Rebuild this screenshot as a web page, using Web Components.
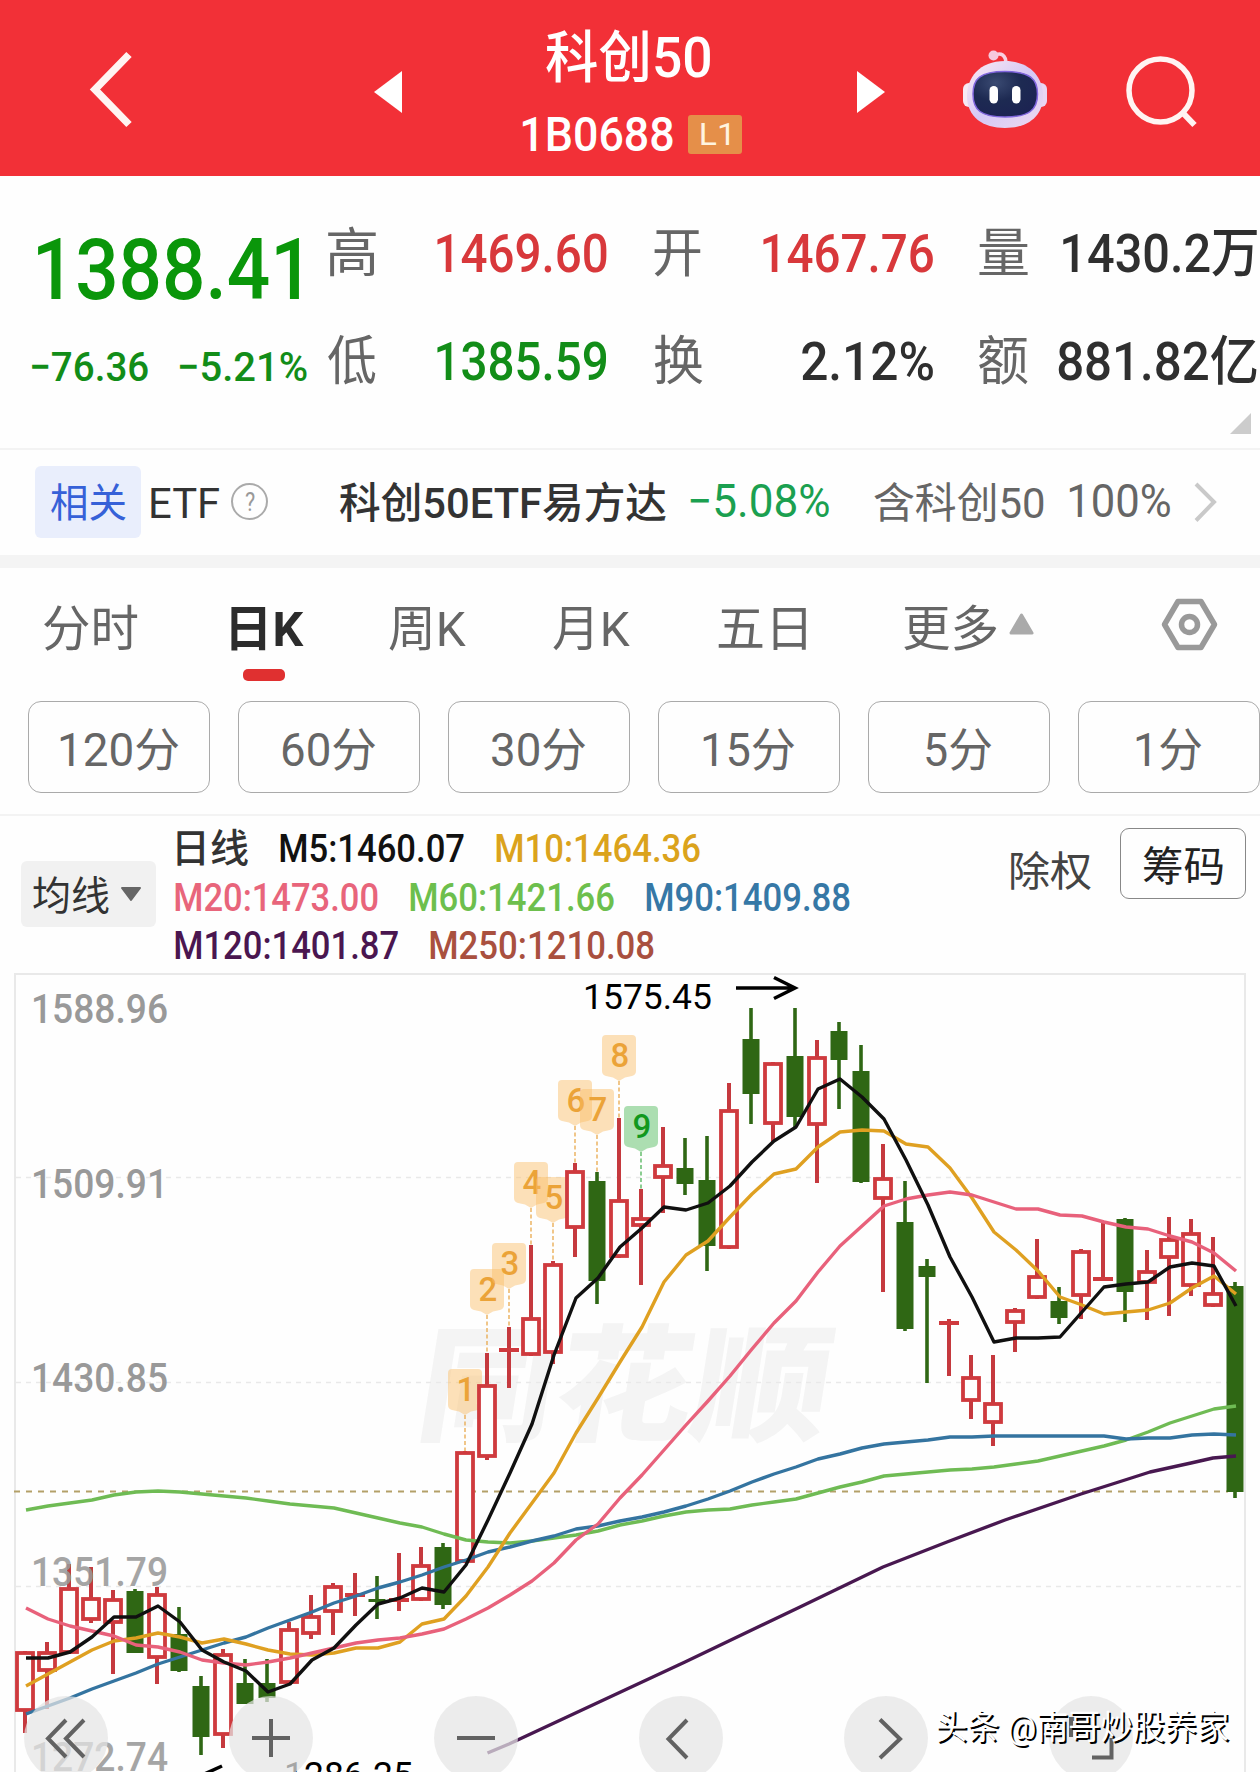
<!DOCTYPE html>
<html lang="zh-CN">
<head>
<meta charset="utf-8">
<title>科创50 1B0688</title>
<style>
  html, body { margin: 0; padding: 0; }
  body {
    width: 1260px;
    height: 1772px;
    overflow: hidden;
    background: #fefefe;
    font-family: Roboto, "Noto Sans CJK SC", sans-serif;
    color: #333;
  }
</style>
</head>
<body>
<stock-page></stock-page>

<script>
// small helper: attach an open shadow root and fill it from a template
function render(el, html) {
  const template = document.createElement('template');
  template.innerHTML = html;
  el.attachShadow({ mode: 'open' });
  el.shadowRoot.appendChild(template.content.cloneNode(true));
}

// ---------- header ----------
class StockHeader extends HTMLElement {
  constructor() {
    super();
    render(this, `
      <style>
        :host { display: flex; height: 176px; background: #f23037; color: #fff; }
        svg { display: block; flex: none; height: 176px; }
        .title { width: 223px; padding-top: 27px; box-sizing: border-box; }
        .name { margin-left: 26px; height: 62px; font-size: 56px; line-height: 62px; font-weight: 500; }
        .code { display: flex; align-items: center; margin: 26px 0 0 3px; height: 39px; font-size: 49px; line-height: 41px; font-weight: 500; }
        .badge {
          display: flex; align-items: center; justify-content: center;
          margin-left: 15px; width: 54px; height: 39px; border-radius: 3px;
          background: #e58f49; color: #fff4e0; font-size: 31px; font-weight: 400;
        }
      </style>
      <svg width="520" viewBox="0 0 520 176">
        <path d="M129 54.500L95 89.500L129 124.500" fill="none" stroke="#fff4f2" stroke-width="7.500"/>
        <path d="M374 92L402 71V113Z" fill="#fff"/>
      </svg>
      <div class="title">
        <div class="name"><fit-text w="164">科创50</fit-text></div>
        <div class="code"><fit-text w="150">1B0688</fit-text><span class="badge"><fit-text w="29">L1</fit-text></span></div>
      </div>
      <svg width="517" viewBox="743 0 517 176">
        <defs>
          <linearGradient id="shell" x1="0" y1="0" x2="1" y2="1">
            <stop offset="0" stop-color="#fdeaf3"/><stop offset=".5" stop-color="#d5c9f5"/><stop offset="1" stop-color="#efd9ef"/>
          </linearGradient>
          <radialGradient id="face" cx=".35" cy=".25" r=".8">
            <stop offset="0" stop-color="#3a4a72"/><stop offset=".5" stop-color="#1d2a52"/><stop offset="1" stop-color="#1c2352"/>
          </radialGradient>
        </defs>
        <path d="M885 92L857 71V113Z" fill="#fff"/>
        <path d="M994 55.500C1001 52 1006 55 1006 64" fill="none" stroke="#f9cfe0" stroke-width="3.500"/>
        <circle cx="993.500" cy="55.500" r="5" fill="#f6c8dc"/>
        <rect x="963" y="83" width="12" height="24" rx="6" fill="#f7e9f5"/>
        <rect x="1035" y="83" width="12" height="24" rx="6" fill="#e9d5f3"/>
        <path d="M1005 61C1031 61 1043 78 1043 96C1043 117 1027 128 1005 128C983 128 967 117 967 96C967 78 979 61 1005 61Z" fill="url(#shell)"/>
        <path d="M1005 71.500C1030 71.500 1037.500 79 1037.500 94C1037.500 110 1029 117 1005 117C981 117 973 110 973 94C973 79 980 71.500 1005 71.500Z" fill="url(#face)" stroke="#8066dd" stroke-width="1.500"/>
        <rect x="989.500" y="86" width="8.500" height="17.500" rx="4.200" fill="#fff"/>
        <rect x="1012" y="86" width="8.500" height="17.500" rx="4.200" fill="#fff"/>
        <ellipse cx="1160.500" cy="90.500" rx="31.500" ry="31.500" fill="none" stroke="#fff4f2" stroke-width="5.500"/>
        <path d="M1182 112L1194.500 125" stroke="#fff4f2" stroke-width="6"/>
      </svg>
    `);
  }
}

// ---------- price and day figures ----------
class StatCell extends HTMLElement {
  connectedCallback() {
    const a = (n) => this.getAttribute(n);
    render(this, `
      <style>
        :host { display: flex; justify-content: space-between; align-items: center; font-size: 53px; line-height: 60px; font-weight: 500; color: ${a('color') || '#2f2f2f'}; }
        .label { color: #666; font-weight: 400; font-size: 53px; }
      </style>
      <fit-text class="label" w="${a('lw')}">${a('label')}</fit-text>
      <fit-text w="${a('w')}">${a('value')}</fit-text>
    `);
  }
}

class QuotePanel extends HTMLElement {
  constructor() {
    super();
    render(this, `
      <style>
        :host { display: flex; height: 274px; box-sizing: border-box; border-bottom: 2px solid #f3f3f3; padding-top: 24px; }
        .price { width: 328px; box-sizing: border-box; color: #0a960a; }
        .last { display: block; margin: 25px 0 0 38px; font-size: 85px; line-height: 90px; font-weight: 500; }
        .diff { display: flex; gap: 32px; margin: 27px 0 0 32px; font-size: 41px; line-height: 50px; font-weight: 500; color: #128d18; }
        .stats { display: grid; grid-template-columns: 279px 279px 278px; grid-template-rows: 108px 108px; column-gap: 46.500px; }
        svg { display: block; width: 21px; height: 21px; margin-left: auto; margin-right: 6px; margin-top: -3px; }
      </style>
      <div class="price">
        <fit-text class="last" w="261">1388.41</fit-text>
        <div class="diff"><fit-text w="116">−76.36</fit-text><fit-text w="127">−5.21%</fit-text></div>
      </div>
      <div>
        <div class="stats">
          <stat-cell label="高" lw="48" value="1469.60" w="170" color="#d8383b"></stat-cell>
          <stat-cell label="开" lw="47" value="1467.76" w="170" color="#d8383b"></stat-cell>
          <stat-cell label="量" lw="49" value="1430.2万" w="194"></stat-cell>
          <stat-cell label="低" lw="48" value="1385.59" w="170" color="#128d18"></stat-cell>
          <stat-cell label="换" lw="49" value="2.12%" w="131"></stat-cell>
          <stat-cell label="额" lw="49" value="881.82亿" w="199"></stat-cell>
        </div>
        <svg viewBox="0 0 21 21"><path d="M21 0V21H0Z" fill="#ccc"/></svg>
      </div>
    `);
  }
}

// ---------- related ETF strip ----------
class RelatedBar extends HTMLElement {
  constructor() {
    super();
    render(this, `
      <style>
        :host { display: flex; align-items: center; height: 118px; box-sizing: border-box; border-bottom: 13px solid #f4f4f4; padding: 0 0 2px 35px; line-height: 55px; font-size: 42px; }
        .tag { display: flex; align-items: center; justify-content: center; width: 106px; height: 72px; border-radius: 6px; background: #e9eefc; color: #3661d8; font-size: 40px; line-height: 60px; }
        .tag fit-text { padding-top: 5px; }
        .text { padding-top: 4px; }
        .help { display: flex; align-items: center; justify-content: center; box-sizing: border-box; width: 37px; height: 37px; margin-left: 12px; border: 2px solid #aaa; border-radius: 50%; color: #999; font-size: 26px; line-height: 30px; }
        .chg { color: #1ba050; font-size: 46px; margin-left: 24px; }
        .hold { color: #666; margin-left: 45px; }
        .pct { color: #666; font-size: 46px; margin-left: 25px; }
        svg { margin-left: 24px; }
      </style>
      <span class="tag"><fit-text w="75">相关</fit-text></span>
      <fit-text class="text" style="margin-left:10px" w="68">ETF</fit-text>
      <span class="help"><fit-text w="10">?</fit-text></span>
      <fit-text class="text" style="margin-left:72px;font-weight:500" w="326">科创50ETF易方达</fit-text>
      <fit-text class="chg" w="139">−5.08%</fit-text>
      <fit-text class="text hold" w="170">含科创50</fit-text>
      <fit-text class="pct" w="101">100%</fit-text>
      <svg width="24" height="42" viewBox="0 0 24 42"><path d="M2 3L20 21L2 39.500" fill="none" stroke="#c9c9c9" stroke-width="4"/></svg>
    `);
  }
}

// ---------- period tabs ----------
class PeriodTabs extends HTMLElement {
  constructor() {
    super();
    const periods = [['120分', 119], ['60分', 94], ['30分', 94], ['15分', 92], ['5分', 66], ['1分', 66]];
    render(this, `
      <style>
        :host { display: block; height: 248px; box-sizing: border-box; border-bottom: 2px solid #f3f3f3; color: #666; }
        .tabs { display: flex; align-items: flex-start; height: 133px; box-sizing: border-box; padding: 32px 0 0 44px; font-size: 49px; line-height: 60px; }
        .on { display: flex; flex-direction: column; align-items: center; color: #2c2c2c; font-weight: 700; margin-left: 93px; }
        .on i { width: 42px; height: 12px; margin-top: 9px; margin-left: -8px; border-radius: 5px; background: #e03030; }
        .tri { margin: 13px 0 0 12px; }
        .gear { margin: -3px 0 0 127px; }
        .periods { display: flex; gap: 28px; padding-left: 28px; }
        .periods span { flex: none; display: flex; align-items: center; justify-content: center; width: 182px; height: 92px; box-sizing: border-box; border: 1.500px solid #aaa; border-radius: 13px; font-size: 46px; line-height: 50px; padding-top: 5px; }
      </style>
      <div class="tabs">
        <fit-text w="94">分时</fit-text>
        <div class="on"><fit-text w="73">日K</fit-text><i></i></div>
        <fit-text style="margin-left:85px" w="77">周K</fit-text>
        <fit-text style="margin-left:87px" w="77">月K</fit-text>
        <fit-text style="margin-left:88px" w="88">五日</fit-text>
        <fit-text style="margin-left:98px" w="93">更多</fit-text>
        <svg class="tri" width="25" height="22" viewBox="0 0 25 22"><path d="M12.500 2L23 20H2Z" fill="#aaa" stroke="#aaa" stroke-width="3" stroke-linejoin="round"/></svg>
        <svg class="gear" width="57" height="55" viewBox="0 0 57 55">
          <path d="M17 4.500H40L53.500 27.500L40 50.500H17L3.500 27.500Z" fill="none" stroke="#999" stroke-width="5.500" stroke-linejoin="round"/>
          <circle cx="28.500" cy="27.500" r="8" fill="none" stroke="#999" stroke-width="5.500"/>
        </svg>
      </div>
      <div class="periods">${periods.map(([t, w]) => `<span><fit-text w="${w}">${t}</fit-text></span>`).join('')}</div>
    `);
  }
}

// ---------- moving average legend ----------
class MaLegend extends HTMLElement {
  constructor() {
    super();
    render(this, `
      <style>
        :host { display: flex; height: 157px; box-sizing: border-box; padding-left: 21px; font-size: 39px; font-weight: 500; }
        .pick { display: flex; align-items: center; width: 135px; height: 66px; margin-top: 45px; border-radius: 6px; background: #f1f1f1; font-size: 40px; line-height: 50px; font-weight: 400; box-sizing: border-box; padding-left: 12px; }
        .pick fit-text { padding-top: 6px; }
        .rows { width: 836px; margin-left: 19px; padding-top: 9px; }
        .rows div { display: flex; height: 48.500px; line-height: 48.500px; }
        .rights { font-size: 41px; line-height: 50px; font-weight: 400; color: #444; margin-top: 31px; }
        .chips { display: flex; align-items: center; justify-content: center; width: 126px; height: 71px; margin: 12px 0 0 29px; box-sizing: border-box; border: 1.500px solid #888; border-radius: 9px; font-size: 41px; line-height: 50px; font-weight: 400; color: #222; padding-top: 6px; }
        .pick svg { margin-left: 11px; }
      </style>
      <div class="pick"><fit-text w="76">均线</fit-text><svg width="22" height="16" viewBox="0 0 22 16"><path d="M2 2H20L11 14Z" fill="#666" stroke="#666" stroke-width="2" stroke-linejoin="round"/></svg></div>
      <div class="rows">
        <div><fit-text style="margin-left:2px" w="71">日线</fit-text>
          <fit-text style="margin-left:32px;color:#111" w="184">M5:1460.07</fit-text>
          <fit-text style="margin-left:32px;color:#dba31c" w="204">M10:1464.36</fit-text></div>
        <div><fit-text style="color:#e8657b" w="203">M20:1473.00</fit-text>
          <fit-text style="margin-left:32px;color:#6dbf4d" w="204">M60:1421.66</fit-text>
          <fit-text style="margin-left:32px;color:#3678a6" w="204">M90:1409.88</fit-text></div>
        <div><fit-text style="color:#4a1650" w="223">M120:1401.87</fit-text>
          <fit-text style="margin-left:32px;color:#a9503f" w="224">M250:1210.08</fit-text></div>
      </div>
      <fit-text class="rights" w="80">除权</fit-text>
      <div class="chips"><fit-text w="80">筹码</fit-text></div>
    `);
  }
}

// ---------- candlestick chart ----------
const X0 = 25, STEP = 22;
const cx = (i) => X0 + STEP * i;

// [colour, body top, body bottom, high, low]
const CANDLES = [
  ['r',1651,1712,1651,1733],['r',1651,1672,1642,1709],['r',1587,1654,1564,1654],['r',1597,1621,1567,1623],
  ['r',1598,1624,1590,1674],['g',1591,1653,1589,1653],['r',1593,1659,1587,1684],['g',1634,1671,1607,1672],
  ['g',1686,1737,1676,1755],['r',1653,1736,1649,1748],['g',1683,1704,1659,1704],['g',1683,1698,1659,1702],
  ['r',1628,1684,1622,1684],['r',1615,1635,1595,1639],['r',1585,1613,1583,1635],['r',1593,1597,1573,1616],
  ['g',1599,1602,1576,1619],['r',1598,1602,1553,1611],['r',1564,1601,1547,1601],['g',1547,1605,1543,1609],
  ['r',1451,1563,1451,1563],['r',1384,1458,1353,1460],['r',1348,1352,1327,1388],['r',1317,1356,1245,1356],
  ['r',1263,1354,1261,1364],['r',1170,1229,1163,1257],['g',1181,1281,1172,1304],['r',1199,1258,1118,1258],
  ['r',1217,1227,1189,1285],['r',1164,1179,1127,1213],['g',1168,1184,1138,1195],['g',1180,1246,1136,1271],
  ['r',1109,1249,1083,1249],['g',1039,1094,1008,1124],['r',1062,1125,1062,1142],['g',1056,1117,1008,1127],
  ['r',1056,1126,1040,1183],['g',1031,1060,1022,1109],['g',1071,1182,1045,1183],['r',1177,1200,1144,1292],
  ['g',1222,1329,1181,1331],['g',1266,1277,1259,1383],['r',1321,1325,1319,1376],['r',1376,1402,1355,1419],
  ['r',1402,1424,1355,1446],['r',1309,1324,1308,1352],['r',1275,1299,1239,1299],['g',1301,1318,1287,1324],
  ['r',1250,1297,1249,1319],['r',1277,1281,1223,1281],['g',1219,1292,1218,1322],['r',1270,1284,1250,1320],
  ['r',1238,1259,1217,1316],['r',1232,1287,1219,1296],['r',1292,1307,1237,1307],['g',1286,1492,1282,1498]
];

// one y value per candle
const AVERAGES = {
  '#6fbb54': [1510,1506,1503,1500,1495,1492,1491,1492,1494,1496,1498,1501,1504,1506,1508,1513,1518,1523,1527,1534,1540,1542,1543,1541,1538,1535,1531,1525,1521,1516,1512,1510,1509,1505,1502,1499,1493,1487,1482,1476,1474,1472,1470,1469,1467,1464,1461,1456,1451,1446,1440,1432,1423,1416,1409,1406],
  '#3474a0': [1714,1706,1698,1689,1681,1673,1664,1657,1650,1643,1637,1628,1620,1612,1603,1596,1588,1582,1575,1567,1560,1552,1547,1541,1536,1529,1526,1521,1517,1512,1506,1499,1491,1482,1474,1467,1459,1454,1448,1444,1442,1440,1437,1437,1436,1436,1436,1436,1436,1436,1439,1438,1438,1435,1434,1435],
  '#dfa021': [1686,1674,1662,1650,1641,1638,1633,1637,1643,1639,1644,1650,1654,1655,1653,1648,1648,1642,1624,1619,1596,1567,1533,1503,1473,1433,1398,1362,1327,1282,1255,1241,1217,1194,1174,1169,1147,1132,1130,1131,1144,1147,1168,1198,1232,1250,1271,1297,1305,1314,1312,1310,1303,1288,1276,1294],
  '#e8617b': [1608,1619,1626,1631,1636,1645,1647,1652,1660,1663,1665,1662,1658,1653,1648,1643,1640,1638,1634,1629,1619,1608,1595,1581,1563,1540,1524,1498,1475,1450,1425,1401,1376,1349,1323,1301,1272,1246,1226,1206,1199,1195,1192,1195,1202,1209,1209,1215,1216,1222,1227,1229,1236,1242,1253,1271],
  '#101010': [1658,1658,1652,1637,1617,1617,1606,1622,1650,1662,1671,1692,1684,1660,1648,1625,1604,1598,1588,1592,1565,1520,1473,1424,1355,1298,1278,1247,1228,1207,1210,1203,1186,1162,1141,1127,1089,1079,1097,1119,1160,1205,1257,1297,1342,1338,1338,1337,1312,1287,1284,1282,1267,1263,1266,1306]
};

// numbered callouts: [digit, candle index, top]
const MARKS = [[1,20,1369],[2,21,1269],[3,22,1243],[4,23,1162],[5,24,1177],[6,25,1080],[7,26,1089],[8,27,1035],[9,28,1106]];

const AXIS = [['1588.96',1023],['1509.91',1198],['1430.85',1392],['1351.79',1586],['1272.74',1771]];

class KlineChart extends HTMLElement {
  constructor() {
    super();
    render(this, `
      <style>
        :host { display: block; position: relative; height: 799px; overflow: hidden; }
        svg { display: block; }
        text { font-family: Roboto, "Noto Sans CJK SC", sans-serif; }
        .axis { font-size: 40px; font-weight: 500; fill: #999; }
        .peak { font-size: 35px; fill: #000; }
        .mark { font-size: 33px; font-weight: 500; text-anchor: middle; }
        .logo { font-size: 126px; font-weight: 900; fill: #f4f4f4; }
        .credit { position: absolute; left: 936px; top: 733px; font-size: 34px; line-height: 42px; color: #fff; text-shadow: 2px 2px 0 #000; }
      </style>
      <svg width="1260" height="799" viewBox="0 973 1260 799">
        ${this.frame()}
        ${MARKS.map((m) => this.mark(m)).join('')}
        ${CANDLES.map((c, i) => this.candle(c, i)).join('')}
        ${AXIS.map(([t, y]) => `<text class="axis" x="31" y="${y}" textLength="137" lengthAdjust="spacingAndGlyphs"${y > 1500 ? ' opacity=".88"' : ''}>${t}</text>`).join('')}
        ${Object.entries(AVERAGES).map(([c, ys]) => this.line(c, ys.map((y, i) => cx(i) + 1 + ',' + y).join(' '))).join('')}
        ${this.line('#481850', '487.500,1753 509,1744 685,1662 800,1607 883,1567 947,1542 1005,1520 1081,1494 1125,1480 1150,1472 1191,1463 1213,1458 1236,1456')}
        <text class="peak" x="583" y="1008.500" textLength="129" lengthAdjust="spacingAndGlyphs">1575.45</text>
        <path d="M736 988H794M774 977.500L795 988L774 998.500" fill="none" stroke="#000" stroke-width="3.500"/>
        <text class="peak" x="284" y="1787" textLength="129" lengthAdjust="spacingAndGlyphs">1286.25</text>
        <path d="M200 1776L222 1766" stroke="#000" stroke-width="3.500"/>
        ${this.controls()}
      </svg>
      <div class="credit"><fit-text w="292">头条 @南哥炒股养家</fit-text></div>
    `);
  }

  frame() {
    return `
      <path d="M15 1772V974H1245V1772" fill="none" stroke="#e9e9e9" stroke-width="2"/>
      <text class="logo" transform="translate(413 1431) skewX(-9)" x="0" y="0" textLength="411" lengthAdjust="spacingAndGlyphs">同花顺</text>
      <path d="M16 1177.500H1244M16 1382.500H1244M16 1586.500H1244" stroke="#e9e9e9" stroke-width="1.500" stroke-dasharray="5 5"/>
      <path d="M14 1491.500H1228" stroke="#b3a068" stroke-width="2" stroke-dasharray="6 6"/>`;
  }

  mark([n, i, top]) {
    const x = cx(i), green = n === 9, tip = top + 46;
    return `
      <path d="M${x} ${tip}V${CANDLES[i][3]}" stroke="${green ? '#4db356' : '#e8a84c'}" stroke-width="1.300" stroke-dasharray="4 2.500"/>
      <path d="M${x - 13} ${top}H${x + 13}Q${x + 17} ${top} ${x + 17} ${top + 4}V${top + 36}Q${x + 17} ${top + 40} ${x + 13} ${top + 41}L${x + 6} ${top + 42.5}L${x} ${tip}L${x - 6} ${top + 42.5}L${x - 13} ${top + 41}Q${x - 17} ${top + 40} ${x - 17} ${top + 36}V${top + 4}Q${x - 17} ${top} ${x - 13} ${top}Z"
        fill="${green ? '#5fbf69' : '#fbbd66'}" fill-opacity="${green ? .52 : .46}"/>
      <text class="mark" x="${x + 1}" y="${top + 31.5}" fill="${green ? '#12981d' : '#eba338'}">${n}</text>`;
  }

  candle([c, top, bottom, high, low], i) {
    const x = cx(i), h = bottom - top;
    if (c === 'g') {
      return `<path d="M${x} ${high}V${low}" stroke="#2f6714" stroke-width="3.600"/><rect x="${x - 8.5}" y="${top}" width="17" height="${h}" fill="#2f6714"/>`;
    }
    const wicks = `<path d="M${x} ${high}V${top + 1}M${x} ${bottom - 1}V${low}" stroke="#c5393e" stroke-width="4"/>`;
    if (h < 6) return wicks + `<rect x="${x - 10}" y="${top}" width="20" height="${h}" fill="#cf3a3e"/>`;
    return wicks + `<rect x="${x - 8}" y="${top + 2}" width="16" height="${h - 4}" fill="#fefefe" stroke="#cf3a3e" stroke-width="3.800"/>`;
  }

  line(color, points) {
    return `<polyline points="${points}" fill="none" stroke="${color}" stroke-width="3.400" stroke-linejoin="round"/>`;
  }

  controls() {
    const icons = [
      [66, 'M66 1720L48 1738.500L66 1757M84 1720L66 1738.500L84 1757'],
      [271, 'M252 1738H290M271 1719V1757'],
      [476, 'M457 1738H495'],
      [681, 'M687 1720L668.500 1739L687 1758'],
      [886, 'M880 1719.500L900 1739L880 1758'],
      [1091, 'M1092 1757.500H1111.500V1738M1090 1719H1071V1737']
    ];
    return icons.map(([x, d]) => `
      <circle cx="${x}" cy="1738" r="42" fill="#e4e4e4" fill-opacity=".72"/>
      <path d="${d}" fill="none" stroke="#626262" stroke-width="4"/>`).join('');
  }
}

class StockPage extends HTMLElement {
  constructor() {
    super();
    render(this, `
      <style>:host { display: block; width: 1260px; height: 1772px; overflow: hidden; }</style>
      <stock-header></stock-header>
      <quote-panel></quote-panel>
      <related-bar></related-bar>
      <period-tabs></period-tabs>
      <ma-legend></ma-legend>
      <kline-chart></kline-chart>
    `);
  }
}

// Text squeezed or stretched so that its ink is exactly w pixels wide
class FitText extends HTMLElement {
  constructor() {
    super();
    render(this, `
      <style>
        :host { display: inline-block; flex: none; white-space: nowrap; }
        span { display: block; width: max-content; transform-origin: 0 50%; }
      </style>
      <span><slot></slot></span>
    `);
  }

  connectedCallback() {
    const w = Number(this.getAttribute('w'));
    const css = getComputedStyle(this);
    const ctx = document.createElement('canvas').getContext('2d');
    ctx.font = `${css.fontWeight} ${css.fontSize} ${css.fontFamily}`;
    const m = ctx.measureText(this.textContent);
    const scale = w / (m.actualBoundingBoxRight + m.actualBoundingBoxLeft);
    this.style.width = w + 'px';
    this.shadowRoot.querySelector('span').style.transform =
      `translateX(${m.actualBoundingBoxLeft * scale}px) scaleX(${scale})`;
  }
}

customElements.define('stock-page', StockPage);
customElements.define('stock-header', StockHeader);
customElements.define('quote-panel', QuotePanel);
customElements.define('stat-cell', StatCell);
customElements.define('related-bar', RelatedBar);
customElements.define('period-tabs', PeriodTabs);
customElements.define('ma-legend', MaLegend);
customElements.define('kline-chart', KlineChart);
customElements.define('fit-text', FitText);
</script>
</body>
</html>
